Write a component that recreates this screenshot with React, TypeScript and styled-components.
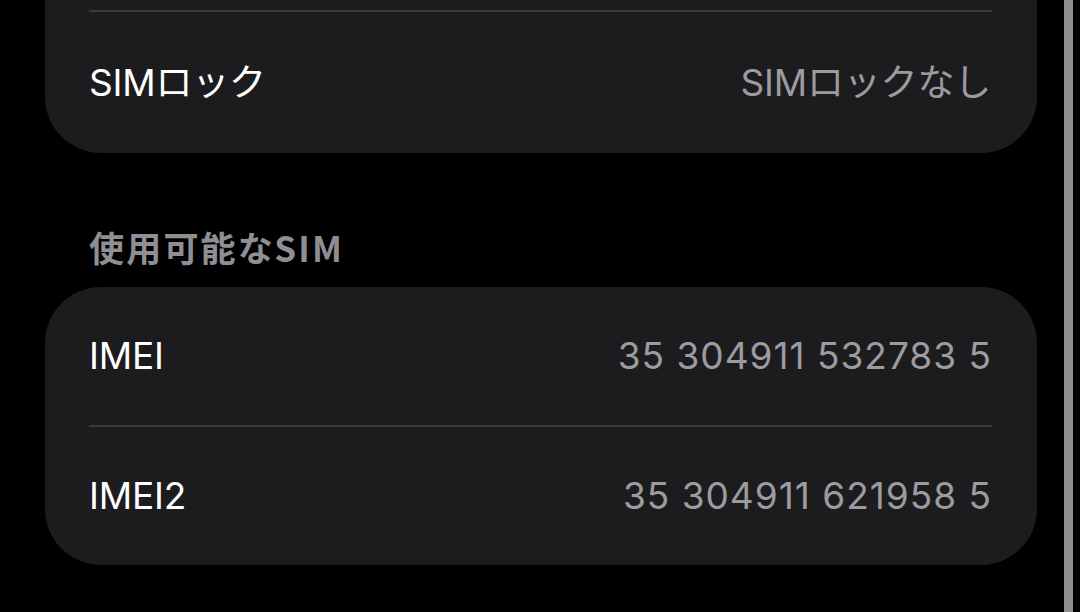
import React from "react";
import styled, { createGlobalStyle } from "styled-components";

const Global = createGlobalStyle`
  html, body { margin: 0; padding: 0; background: #000; }
  body { width: 1080px; height: 612px; overflow: hidden; }
  * { box-sizing: border-box; }
`;

const Page = styled.div`
  display: flex;
  width: 1080px;
  height: 612px;
  background: #000;
  font-family: "Inter", "Noto Sans CJK JP", sans-serif;
  -webkit-font-smoothing: antialiased;
`;

const Content = styled.div`
  flex: 1;
  min-width: 0;
  display: flex;
  flex-direction: column;
  padding: 0 27px 0 45px;
`;

const Edge = styled.div`
  flex: 0 0 9px;
  width: 9px;
  height: 612px;
  margin-right: 7px;
  background: #8f8f8f;
`;

const Card = styled.div<{ $cutTop?: boolean }>`
  background: #1c1c1e;
  border-radius: ${(p) => (p.$cutTop ? "0 0 56px 56px" : "56px")};
  padding-top: ${(p) => (p.$cutTop ? "10px" : "0")};
  display: flex;
  flex-direction: column;
`;

const Divider = styled.div`
  height: 2px;
  margin: 0 45px 0 44px;
  background: #3a3a3d;
`;

const Row = styled.div<{ $h: number }>`
  height: ${(p) => p.$h}px;
  display: flex;
  align-items: center;
  justify-content: space-between;
  padding: 0 46px 0 44px;
`;

const Label = styled.span`
  color: #ffffff;
  font-size: 37px;
  line-height: 44px;
  letter-spacing: -0.2px;
`;

const Value = styled.span<{ $num?: boolean }>`
  color: #9b9ba0;
  font-size: 37px;
  line-height: 44px;
  letter-spacing: ${(p) => (p.$num ? "1px" : "-0.2px")};
  margin-right: ${(p) => (p.$num ? "-1px" : "0")};
`;

const SectionHeader = styled.div`
  margin: 74px 0 20px 44px;
  height: 40px;
  line-height: 40px;
  font-family: "Noto Sans CJK JP", "Inter", sans-serif;
  font-size: 35px;
  font-weight: 700;
  font-feature-settings: "palt";
  letter-spacing: 2.2px;
  color: #8e8e93;
`;

export default function App() {
  return (
    <>
      <Global />
      <Page>
        <Content>
          <Card $cutTop>
            <Divider />
            <Row $h={141}>
              <Label>SIMロック</Label>
              <Value>SIMロックなし</Value>
            </Row>
          </Card>
          <SectionHeader>使用可能なSIM</SectionHeader>
          <Card>
            <Row $h={138}>
              <Label>IMEI</Label>
              <Value $num>35 304911 532783 5</Value>
            </Row>
            <Divider />
            <Row $h={138}>
              <Label>IMEI2</Label>
              <Value $num>35 304911 621958 5</Value>
            </Row>
          </Card>
        </Content>
        <Edge />
      </Page>
    </>
  );
}
